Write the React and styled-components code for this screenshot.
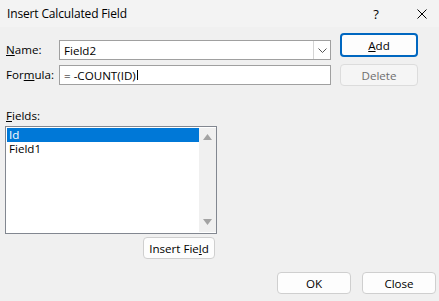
import React from "react";
import styled, { createGlobalStyle } from "styled-components";

const Global = createGlobalStyle`
  html, body { margin: 0; padding: 0; background: #f0f0f0; }
  * { box-sizing: border-box; }
`;

const Window = styled.div`
  width: 439px;
  height: 301px;
  background: #f0f0f0;
  display: flex;
  flex-direction: column;
  font-family: "Segoe UI", "Open Sans", "Noto Sans", sans-serif;
  font-size: 11.6px;
  color: #000;
  overflow: hidden;
`;

const TitleBar = styled.div`
  height: 27px;
  flex: none;
  background: #f3f3f3;
  display: flex;
  align-items: center;
  padding-left: 7px;
  padding-right: 7px;
  gap: 26px;
`;

const Title = styled.span`
  flex: 1;
  font-size: 12px;
  letter-spacing: -0.15px;
`;

const TitleButton = styled.span`
  width: 20px;
  display: flex;
  justify-content: center;
  align-items: center;
  font-size: 13px;
`;

const Body = styled.div`
  flex: 1;
  display: flex;
  flex-direction: column;
`;

const Top = styled.div`
  display: flex;
  padding-left: 6px;
`;

const Form = styled.div`
  display: grid;
  grid-template-columns: 53px 272px;
  row-gap: 3px;
  margin-top: 12px;
  align-items: center;
`;

const Label = styled.span`
  line-height: 20px;
`;

const U = styled.span`
  text-decoration: underline;
  text-underline-offset: 1px;
`;

const Input = styled.div`
  height: 20px;
  border: 1px solid #a0a0a0;
  background: #fff;
  display: flex;
  align-items: center;
  padding-left: 4px;
  white-space: pre;
`;

const Combo = styled(Input)`
  padding-right: 0;
`;

const ComboText = styled.span`
  flex: 1;
`;

const ComboArrow = styled.span`
  width: 17px;
  height: 18px;
  border-left: 1px solid #d5d5d5;
  display: flex;
  align-items: center;
  justify-content: center;
`;

const Caret = styled.span`
  display: inline-block;
  width: 1px;
  height: 10px;
  background: #000;
  margin-left: 1px;
`;

const ButtonCol = styled.div`
  display: flex;
  flex-direction: column;
  gap: 7px;
  margin-left: 9px;
  margin-top: 6px;
`;

const Button = styled.div`
  width: ${(p) => p.$w || 78}px;
  height: ${(p) => p.$h || 22}px;
  display: flex;
  align-items: center;
  justify-content: center;
  border-radius: 4px;
  background: ${(p) => (p.$disabled ? "#f5f5f5" : "#fdfdfd")};
  color: ${(p) => (p.$disabled ? "#6e6e6e" : "#000")};
  border: ${(p) =>
    p.$default ? "2px solid #0067c0" : `1px solid ${p.$disabled ? "#dcdcdc" : "#cfcfcf"}`};
`;

const FieldsLabel = styled.div`
  margin-top: 22px;
  padding-left: 6px;
  line-height: 16px;
`;

const ListRow = styled.div`
  display: flex;
  padding-left: 5px;
  margin-top: 2px;
`;

const ListBox = styled.div`
  width: 212px;
  height: 108px;
  border: 1px solid #828790;
  background: #fff;
  display: flex;
  padding: 1px 0 1px 1px;
`;

const Items = styled.div`
  flex: 1;
  display: flex;
  flex-direction: column;
`;

const Item = styled.div`
  height: 14px;
  line-height: 14px;
  padding-left: 2px;
  overflow: hidden;
  background: ${(p) => (p.$selected ? "#0078d7" : "transparent")};
  color: ${(p) => (p.$selected ? "#fff" : "#000")};
`;

const Scrollbar = styled.div`
  width: 17px;
  background: #f0f0f0;
  display: flex;
  flex-direction: column;
  justify-content: space-between;
  align-items: center;
  padding: 6px 0 7px;
`;

const InsertRow = styled.div`
  display: flex;
  padding-left: 143px;
  margin-top: 3px;
`;

const Footer = styled.div`
  display: flex;
  justify-content: flex-end;
  gap: 11px;
  padding-right: 3px;
  margin-top: 13px;
`;

const Arrow = ({ up }) => (
  <svg width="9" height="6" viewBox="0 0 9 6">
    <polygon points={up ? "4.5,0 9,6 0,6" : "0,0 9,0 4.5,6"} fill="#a3a3a3" />
  </svg>
);

export default function App() {
  return (
    <Window>
      <Global />
      <TitleBar>
        <Title>Insert Calculated Field</Title>
        <TitleButton>?</TitleButton>
        <TitleButton>
          <svg width="10" height="10" viewBox="0 0 10 10">
            <path d="M0.5 0.5L9.5 9.5M9.5 0.5L0.5 9.5" stroke="#000" strokeWidth="1" />
          </svg>
        </TitleButton>
      </TitleBar>
      <Body>
        <Top>
          <Form>
            <Label>
              <U>N</U>ame:
            </Label>
            <Combo>
              <ComboText>Field2</ComboText>
              <ComboArrow>
                <svg width="9" height="5" viewBox="0 0 9 5">
                  <path d="M0.5 0.5L4.5 4.5L8.5 0.5" stroke="#555" fill="none" strokeWidth="1" />
                </svg>
              </ComboArrow>
            </Combo>
            <Label>
              For<U>m</U>ula:
            </Label>
            <Input>
              {"= -COUNT(ID)"}
              <Caret />
            </Input>
          </Form>
          <ButtonCol>
            <Button $default $h={24}>
              <U>A</U>dd
            </Button>
            <Button $disabled $h={22}>
              Delete
            </Button>
          </ButtonCol>
        </Top>
        <FieldsLabel>
          <U>F</U>ields:
        </FieldsLabel>
        <ListRow>
          <ListBox>
            <Items>
              <Item $selected>Id</Item>
              <Item>Field1</Item>
            </Items>
            <Scrollbar>
              <Arrow up />
              <Arrow />
            </Scrollbar>
          </ListBox>
        </ListRow>
        <InsertRow>
          <Button $w={72} $h={22}>
            Insert Fie<U>l</U>d
          </Button>
        </InsertRow>
        <Footer>
          <Button $w={74} $h={22}>OK</Button>
          <Button $w={74} $h={22}>Close</Button>
        </Footer>
      </Body>
    </Window>
  );
}
